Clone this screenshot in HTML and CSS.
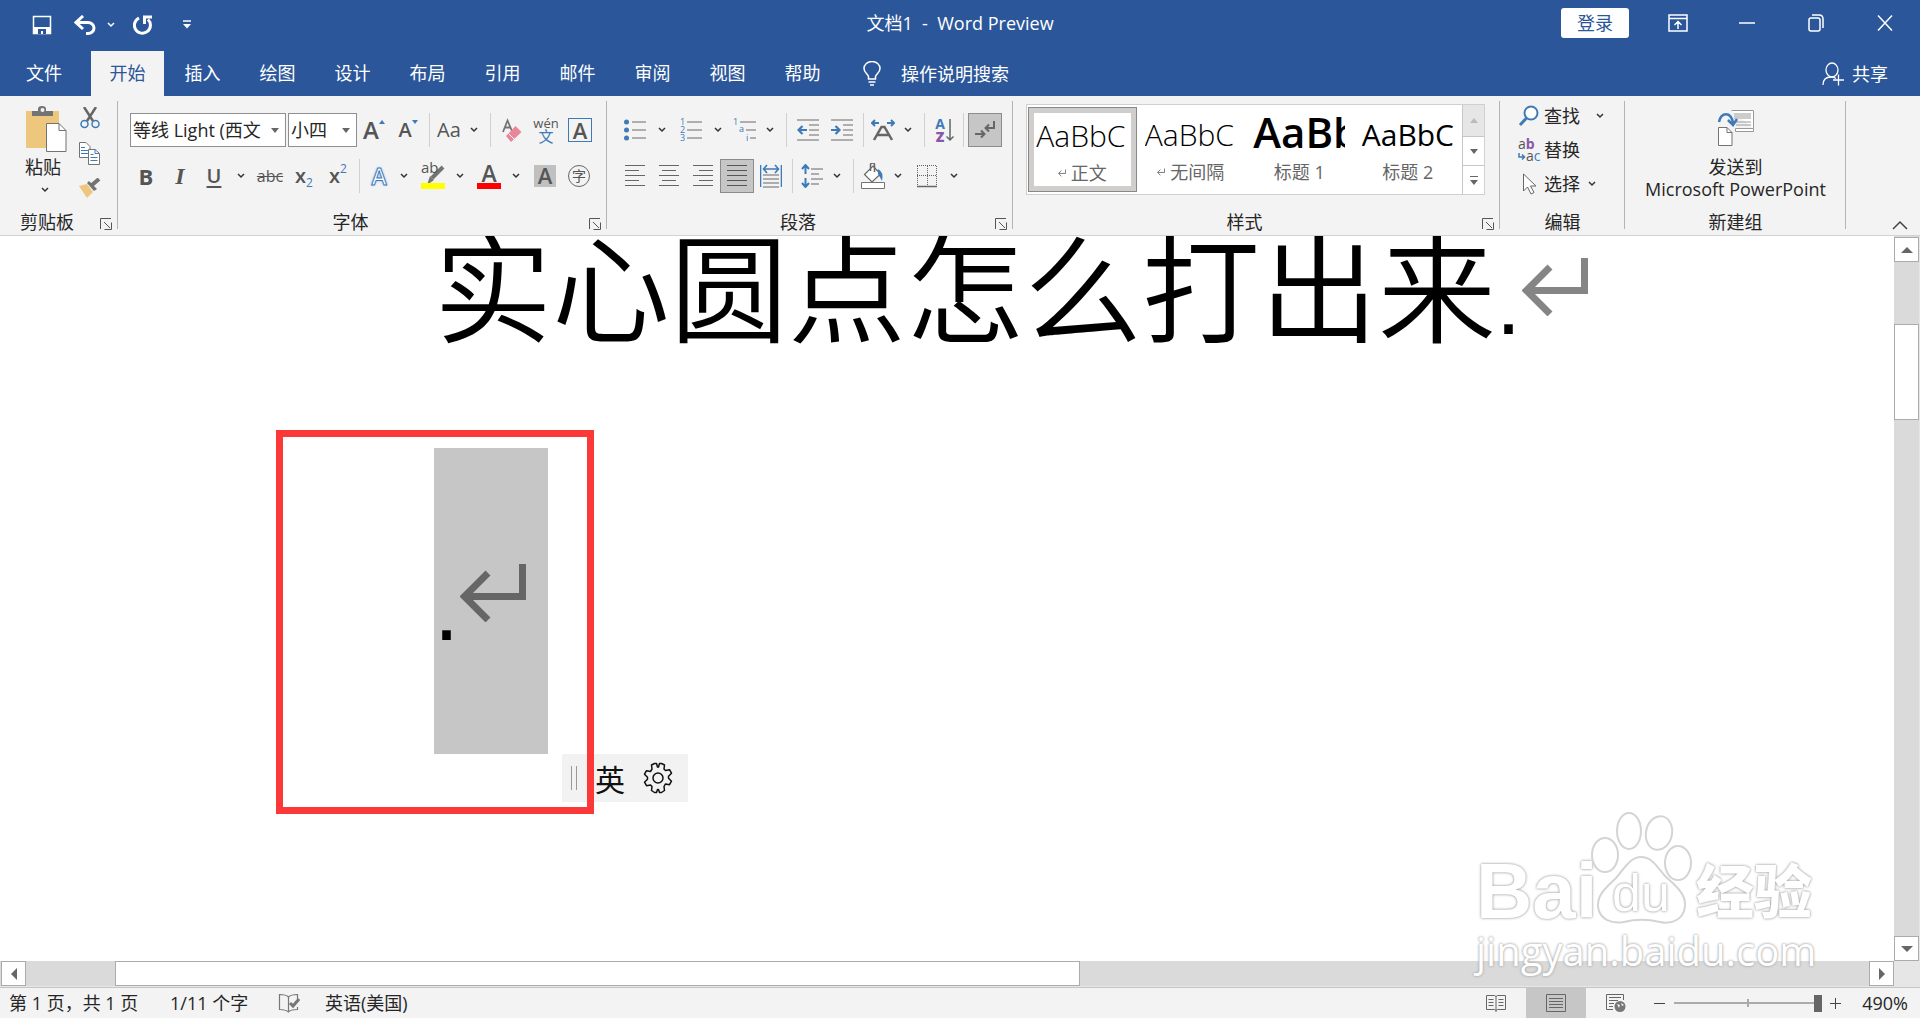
FILE: index.html
```html
<!DOCTYPE html>
<html lang="zh-CN">
<head>
    <meta charset="UTF-8">
    <title>文档1 - Word Preview</title>
    <link rel="stylesheet" href="styles.css">
</head>
<body>
<svg class="sprite">
    <symbol id="chev" viewBox="0 0 8 6"><path d="M1 1l3 3 3-3" fill="none" stroke="#333" stroke-width="1.5"/></symbol>
    <symbol id="launch" viewBox="0 0 12 12"><path d="M.5 11V.5H11M4 4l6 6M11.500 4.500v7h-7" fill="none" stroke="#555"/></symbol>
    <symbol id="enter" viewBox="0 0 66 58"><path d="M62.500 0v32.500H6M28 9L4.500 32.500 28 56" fill="none" stroke="currentColor" stroke-width="7"/></symbol>
</svg>

<header>
    <div class="titlebar">
        <div class="quick">
            <button class="q-save" aria-label="保存"><svg width="20" height="20"><path d="M1.500 1.500h17v17h-17z" fill="none" stroke="#fff" stroke-width="1.500"/><path d="M1 12h18v7H1z" fill="#fff"/><path d="M6 14h8v5h-3v-3H9v3H6z" fill="#2b579a"/></svg></button>
            <button class="q-undo" aria-label="撤消"><svg width="22" height="20"><path d="M9 1L2 7.500 9 14M2.500 7.500H14a6 5.500 0 0 1 0 11h-2" fill="none" stroke="#fff" stroke-width="3"/></svg></button>
            <button class="q-more" aria-label="撤消列表"><svg width="8" height="6"><path d="M1 1l3 3 3-3" fill="none" stroke="#fff" stroke-width="1.500"/></svg></button>
            <button class="q-redo" aria-label="重复"><svg width="20" height="20"><path d="M6 3a8 8 0 1 0 9 1.500M11.500 9V2H19" fill="none" stroke="#fff" stroke-width="3"/></svg></button>
            <button class="q-custom" aria-label="自定义"><svg width="8" height="9"><path d="M0 1h8" stroke="#fff" stroke-width="1.500"/><path d="M0 4h8L4 8.500z" fill="#fff"/></svg></button>
        </div>
        <div class="title">文档1&nbsp; -&nbsp; Word Preview</div>
        <div class="window">
            <button class="login">登录</button>
            <button class="win" aria-label="功能区显示选项"><svg width="20" height="18"><path d="M1 1h18v16H1zM1 4.500h18M10 15V7.500M6.500 11L10 7.500 13.500 11" fill="none" stroke="#fff" stroke-width="1.500"/></svg></button>
            <button class="win" aria-label="最小化"><svg width="16" height="18"><path d="M0 9h16" stroke="#fff" stroke-width="1.500"/></svg></button>
            <button class="win" aria-label="还原"><svg width="16" height="18"><rect x="1" y="4" width="11" height="13" rx="2" fill="none" stroke="#fff" stroke-width="1.500"/><path d="M4 1h7q4 0 4 4v9" fill="none" stroke="#fff" stroke-width="1.500"/></svg></button>
            <button class="win" aria-label="关闭"><svg width="16" height="18"><path d="M1 1.500l14 15M15 1.500l-14 15" stroke="#fff" stroke-width="1.500"/></svg></button>
        </div>
    </div>
    <nav>
        <a href="#" class="file">文件</a>
        <a href="#" class="active">开始</a>
        <a href="#">插入</a>
        <a href="#">绘图</a>
        <a href="#">设计</a>
        <a href="#">布局</a>
        <a href="#">引用</a>
        <a href="#">邮件</a>
        <a href="#">审阅</a>
        <a href="#">视图</a>
        <a href="#">帮助</a>
        <a href="#" class="tell"><svg width="18" height="26"><path d="M5.500 18v-2.500C4.500 12.500 1 11.500 1 7.500a8 7 0 0 1 16 0c0 4-3.500 5-4.500 8V18zM5.500 21h7M7 24h4" fill="none" stroke="#fff" stroke-width="1.500"/></svg>操作说明搜索</a>
        <a href="#" class="share"><svg width="22" height="24"><path d="M1 23c0-5 3-8 8-8 2 0 3 0 5 1.500" fill="none" stroke="#fff" stroke-width="1.300"/><ellipse cx="10" cy="8" rx="6" ry="7" fill="none" stroke="#fff" stroke-width="1.300"/><path d="M11 18h11M16.500 12.500v11" stroke="#fff" stroke-width="1.300"/></svg>共享</a>
    </nav>
</header>

<div class="ribbon">
    <section class="group clipboard">
        <div class="body">
            <button class="paste">
                <svg width="42" height="46"><path d="M1 5h33v37H1z" fill="#eec77e"/><path d="M7 10V5h6V3q0-3 4-3t4 3v2h7v5z" fill="#737373"/><circle cx="17.500" cy="4" r="2" fill="#f3f3f3"/><path d="M21.500 17.500H34l7 7v21H21.500z" fill="#fff" stroke="#737373"/><path d="M34 17.500v7h7" fill="none" stroke="#737373"/></svg>
                <span>粘贴</span>
                <svg class="chev"><use href="#chev"/></svg>
            </button>
            <div class="clips">
                <button aria-label="剪切"><svg width="20" height="22"><path d="M4 0l9 14M16 0L7 14" stroke="#666" stroke-width="2.500"/><circle cx="4.500" cy="17" r="3.500" fill="none" stroke="#3f7ab8" stroke-width="1.500"/><circle cx="15.500" cy="17" r="3.500" fill="none" stroke="#3f7ab8" stroke-width="1.500"/></svg></button>
                <button aria-label="复制"><svg width="21" height="23"><path d="M.5.5H7l4 4v11H.5z" fill="#fff" stroke="#737373"/><path d="M2 5.500h4M2 8.500h7M2 11.500h7" stroke="#3f7ab8"/><path d="M9.500 7.500H16l4.500 4v11h-11z" fill="#fff" stroke="#737373"/><path d="M16 7.500v4h4M11.500 12.500h3M11.500 15.500h7M11.500 18.500h7" fill="none" stroke="#3f7ab8"/></svg></button>
                <button aria-label="格式刷"><svg width="23" height="20"><path d="M1 8l8-2 6 8-6 6z" fill="#eec77e"/><path d="M9 5l2-2 8 8-3 2z" fill="#737373"/><path d="M14 7l7-6" stroke="#737373" stroke-width="4"/></svg></button>
            </div>
        </div>
        <footer><span>剪贴板</span><button class="launcher" aria-label="剪贴板选项"><svg><use href="#launch"/></svg></button></footer>
    </section>

    <section class="group font">
        <div class="body">
            <div class="row first">
                <label class="combo family"><select aria-label="字体"><option>等线 Light (西文</option></select></label>
                <label class="combo size"><select aria-label="字号"><option>小四</option></select></label>
                <button class="btn glyph" aria-label="增大字号"><span class="up">A</span><svg width="6" height="20"><path d="M0 4l3-4 3 4z" fill="#3f7ab8"/></svg></button>
                <button class="btn glyph" aria-label="减小字号"><span class="down">A</span><svg width="6" height="20"><path d="M0 0h6L3 4z" fill="#3f7ab8"/></svg></button>
                <i class="sep"></i>
                <button class="btn narrow glyph case">Aa</button><button class="caret" aria-label="更改大小写"><svg><use href="#chev"/></svg></button>
                <i class="sep"></i>
                <button class="btn" aria-label="清除格式"><svg width="20" height="24"><path d="M1 14L5.500 2.500 10 13M3 9.500h5" fill="none" stroke="#737373" stroke-width="1.800"/><path d="M4 18L13.500 8l6 6L9 24z" fill="#e98699"/><path d="M6.500 15.500l6 6" stroke="#f3f3f3"/></svg></button>
                <button class="btn pinyin"><span>wén</span><b>文</b></button>
                <button class="btn"><span class="boxed">A</span></button>
            </div>
            <div class="row second">
                <button class="btn bold">B</button>
                <button class="btn italic">I</button>
                <button class="btn under">U</button><button class="caret" aria-label="下划线"><svg><use href="#chev"/></svg></button>
                <button class="btn strike">abc</button>
                <button class="btn script">x<sub>2</sub></button>
                <button class="btn script">x<sup>2</sup></button>
                <i class="sep"></i>
                <button class="btn narrow effect">A</button><button class="caret" aria-label="文本效果"><svg><use href="#chev"/></svg></button>
                <button class="btn mark"><span>ab</span><svg width="24" height="26"><path d="M22 4L11 15" stroke="#737373" stroke-width="4"/><path d="M9 13l4 4-7 5z" fill="#737373"/><path d="M0 20h24v6H0z" fill="#ff0"/></svg></button><button class="caret" aria-label="突出显示颜色"><svg><use href="#chev"/></svg></button>
                <button class="btn color"><span>A</span></button><button class="caret" aria-label="字体颜色"><svg><use href="#chev"/></svg></button>
                <button class="btn"><span class="shade">A</span></button>
                <button class="btn"><span class="circled">字</span></button>
            </div>
        </div>
        <footer><span>字体</span><button class="launcher" aria-label="字体选项"><svg><use href="#launch"/></svg></button></footer>
    </section>

    <section class="group para">
        <div class="body">
            <div class="row">
                <button class="btn" aria-label="项目符号"><svg width="22" height="22"><path d="M8 3h14M8 11h14M8 19h14" stroke="#6a6a6a"/><g fill="#3f7ab8"><circle cx="2.500" cy="3" r="2.500"/><circle cx="2.500" cy="11" r="2.500"/><circle cx="2.500" cy="19" r="2.500"/></g></svg></button><button class="caret" aria-label="项目符号库"><svg><use href="#chev"/></svg></button>
                <button class="btn" aria-label="编号"><svg class="list" width="22" height="22"><path d="M7 3h15M7 11h15M7 19h15" stroke="#6a6a6a"/><g class="num"><text x="0" y="6">1</text><text x="0" y="14">2</text><text x="0" y="22">3</text></g></svg></button><button class="caret" aria-label="编号库"><svg><use href="#chev"/></svg></button>
                <button class="btn narrow" aria-label="多级列表"><svg class="list" width="24" height="22"><path d="M7 3h16M13 11h10M17 19h6" stroke="#6a6a6a"/><g class="num"><text x="0" y="6">1</text><text x="6" y="13">a</text><text x="13" y="22">i</text></g></svg></button><button class="caret" aria-label="列表库"><svg><use href="#chev"/></svg></button>
                <i class="sep"></i>
                <button class="btn" aria-label="减少缩进"><svg width="22" height="22"><path d="M0 1h22M12 6h10M12 11h10M12 16h10M0 21h22" stroke="#6a6a6a"/><path d="M10 11H2M5.500 7L1.500 11l4 4" fill="none" stroke="#3f7ab8" stroke-width="2.200"/></svg></button>
                <button class="btn" aria-label="增加缩进"><svg width="22" height="22"><path d="M0 1h22M12 6h10M12 11h10M12 16h10M0 21h22" stroke="#6a6a6a"/><path d="M0 11h8M4.500 7l4 4-4 4" fill="none" stroke="#3f7ab8" stroke-width="2.200"/></svg></button>
                <i class="sep"></i>
                <button class="btn narrow" aria-label="中文版式"><svg width="24" height="22"><path d="M3 21l7.500-13h3L21 21M6.500 16h11" fill="none" stroke="#666" stroke-width="2.500"/><path d="M8 4H1.500M4 1L1 4l3 3M16 4h6.500M20 1l3 3-3 3" fill="none" stroke="#3f7ab8" stroke-width="2"/></svg></button><button class="caret" aria-label="中文版式列表"><svg><use href="#chev"/></svg></button>
                <i class="sep"></i>
                <button class="btn narrow sort"><span>A<b>Z</b></span><svg width="8" height="24"><path d="M4 1v21M.5 18.500L4 22l3.500-3.500" fill="none" stroke="#666" stroke-width="1.500"/></svg></button>
                <i class="sep"></i>
                <button class="btn on" aria-label="显示编辑标记"><svg width="22" height="20"><path d="M20 1v7h-8M15 4.500L11.500 8l3.500 3.500M1 14h9M7 10.500l3.500 3.500L7 17.500" fill="none" stroke="#666" stroke-width="2"/></svg></button>
            </div>
            <div class="row">
                <button class="btn" aria-label="左对齐"><svg width="20" height="22"><path d="M0 .5h20M0 5.500h14M0 10.500h20M0 15.500h14M0 20.500h20" stroke="#666"/></svg></button>
                <button class="btn" aria-label="居中"><svg width="20" height="22"><path d="M0 .5h20M3 5.500h14M0 10.500h20M3 15.500h14M0 20.500h20" stroke="#666"/></svg></button>
                <button class="btn" aria-label="右对齐"><svg width="20" height="22"><path d="M0 .5h20M6 5.500h14M0 10.500h20M6 15.500h14M0 20.500h20" stroke="#666"/></svg></button>
                <button class="btn on" aria-label="两端对齐"><svg width="20" height="22"><path d="M0 .5h20M0 5.500h20M0 10.500h20M0 15.500h20M0 20.500h20" stroke="#555"/></svg></button>
                <button class="btn" aria-label="分散对齐"><svg width="22" height="24"><path d="M3 11h16M3 15h16M3 19h16M3 23h16" stroke="#666"/><path d="M.5 1v22M21.500 1v22M4 5h14M7 1L3.500 5 7 9M15 1l3.500 4L15 9" fill="none" stroke="#3f7ab8" stroke-width="1.600"/></svg></button>
                <i class="sep"></i>
                <button class="btn narrow" aria-label="行距"><svg width="22" height="24"><path d="M10 5h12M10 10h8M10 15h12M10 20h8" stroke="#666"/><path d="M4.500 2v8M1 5l3.500-4L8 5M4.500 14v8M1 19l3.500 4L8 19" fill="none" stroke="#3f7ab8" stroke-width="2"/></svg></button><button class="caret" aria-label="行距列表"><svg><use href="#chev"/></svg></button>
                <i class="sep"></i>
                <button class="btn narrow" aria-label="底纹"><svg width="24" height="26"><path d="M3.500 11.500L12 3l7.500 8L11 19z" fill="#fff" stroke="#666" stroke-width="1.200"/><path d="M9.500 8V2q0-2 2-2t2 2v7" fill="none" stroke="#666" stroke-width="1.500"/><path d="M17 6q6 3 4 12-2-4-4-7z" fill="#3f7ab8"/><path d="M.5 19.500h23v6H.5z" fill="#fff" stroke="#737373"/></svg></button><button class="caret" aria-label="底纹颜色"><svg><use href="#chev"/></svg></button>
                <button class="btn" aria-label="边框"><svg width="22" height="24"><path d="M1.500 2v20M11.500 2v20M20.500 2v20M1 1.500h20M1 11.500h20" stroke="#666" stroke-dasharray="1 1"/><path d="M1 22.500h20" stroke="#666" stroke-width="1.500"/></svg></button><button class="caret" aria-label="边框列表"><svg><use href="#chev"/></svg></button>
            </div>
        </div>
        <footer><span>段落</span><button class="launcher" aria-label="段落选项"><svg><use href="#launch"/></svg></button></footer>
    </section>

    <section class="group styles">
        <div class="gallery">
            <button class="style current"><span class="sample">AaBbC</span><span class="name"><svg class="tiny"><use href="#enter"/></svg>正文</span></button>
            <button class="style"><span class="sample">AaBbC</span><span class="name"><svg class="tiny"><use href="#enter"/></svg>无间隔</span></button>
            <button class="style"><span class="sample h1">AaBbC</span><span class="name">标题 1</span></button>
            <button class="style"><span class="sample h2">AaBbC</span><span class="name">标题 2</span></button>
            <div class="spin">
                <button class="off" aria-label="上一行"><svg width="8" height="5"><path d="M0 5l4-5 4 5z" fill="#bbb"/></svg></button>
                <button aria-label="下一行"><svg width="8" height="5"><path d="M0 0h8L4 5z" fill="#666"/></svg></button>
                <button aria-label="其他"><svg width="8" height="9"><path d="M0 .5h8" stroke="#666"/><path d="M0 4h8L4 9z" fill="#666"/></svg></button>
            </div>
        </div>
        <footer><span>样式</span><button class="launcher" aria-label="样式选项"><svg><use href="#launch"/></svg></button></footer>
    </section>

    <section class="group edit">
        <div class="body">
            <button><svg width="22" height="22"><circle cx="13" cy="8" r="6.500" fill="#fff" stroke="#3f7ab8" stroke-width="2"/><path d="M8.500 13L2 20" stroke="#3f7ab8" stroke-width="3"/></svg>查找<svg class="chev far"><use href="#chev"/></svg></button>
            <button><span class="swap">a<b>b</b><br><svg width="8" height="8"><path d="M1 0v4h5M4 1.500L6.500 4 4 6.500" fill="none" stroke="#3f7ab8" stroke-width="1.500"/></svg>a<i>c</i></span>替换</button>
            <button><svg width="22" height="22"><path d="M5.500 1v17l4-4 3.500 7 3-1.500-3.500-6.500H18z" fill="#fff" stroke="#666"/></svg>选择<svg class="chev"><use href="#chev"/></svg></button>
        </div>
        <footer><span>编辑</span></footer>
    </section>

    <section class="group send">
        <button class="body">
            <svg width="38" height="38"><path d="M14.500 1.500h22v18h-18v3h18v-3" fill="#fff" stroke="#999"/><path d="M17 4h17v6H17z" fill="#ccc"/><path d="M19 13h15M19 16h15" stroke="#999"/><path d="M2 13C4 3 14 2 16 14M11 11l5 5 4-6" fill="none" stroke="#3f7ab8" stroke-width="2.500"/><path d="M1.500 18.500H10l5 5v13H1.500z" fill="#fff" stroke="#737373"/><path d="M10 18.500v5h5" fill="none" stroke="#737373"/></svg>
            <span>发送到<br>Microsoft PowerPoint</span>
        </button>
        <footer><span>新建组</span></footer>
    </section>
    <button class="collapse" aria-label="折叠功能区"><svg width="16" height="10"><path d="M1 9l7-7 7 7" fill="none" stroke="#444" stroke-width="1.500"/></svg></button>
</div>

<main>
    <div class="doc">
        <p>实心圆点怎么打出来<span class="dot">.</span><svg class="mark-end"><use href="#enter"/></svg></p>
        <p><span class="selected"><span class="dot">.</span><svg class="mark-end"><use href="#enter"/></svg></span></p>
        <div class="ime"><i></i><span>英</span><svg width="32" height="32" viewBox="-16 -16 32 32"><path d="M-3.500-14.500h2L-.5-11H.5l1-3.500h2l3 1.500-.5 4 1.500 1.500 4-.8 2 3.500-3 3v2l3 3-2 3.500-4-.8L6 8.500l.5 4-3 2h-2L.5 11.500h-1l-1 3h-2l-3-2 .5-4-1.500-1.600-4 .8-2-3.500 3-3v-2l-3-3 2-3.500 4 .8L-6-9l-.5-4z" fill="none" stroke="#111" stroke-width="1.500" stroke-linejoin="round"/><circle r="5" fill="none" stroke="#111" stroke-width="1.500"/></svg></div>
        <div class="frame"></div>
    </div>
    <div class="vscroll">
        <button aria-label="向上"><svg width="12" height="6"><path d="M0 6l6-6 6 6z" fill="#666"/></svg></button>
        <div class="thumb"></div>
        <button aria-label="向下"><svg width="12" height="6"><path d="M0 0h12L6 6z" fill="#666"/></svg></button>
    </div>
    <div class="hscroll">
        <button aria-label="向左"><svg width="6" height="12"><path d="M6 0v12L0 6z" fill="#666"/></svg></button>
        <div class="thumb"></div>
        <button aria-label="向右"><svg width="6" height="12"><path d="M0 0v12l6-6z" fill="#666"/></svg></button>
    </div>
    <div class="watermark">
        <div class="brand">
            <span class="bai">Bai</span>
            <span class="paw"><svg width="106" height="114"><g fill="#fff" stroke="#d4d4d4" stroke-width="2"><ellipse cx="17" cy="44" rx="13" ry="17"/><ellipse cx="41" cy="20" rx="12" ry="18"/><ellipse cx="71" cy="22" rx="13" ry="17" transform="rotate(12 71 22)"/><ellipse cx="90" cy="52" rx="13" ry="17"/><path d="M53 46c12 0 17 12 25 20 10 9 20 17 19 29-1 13-13 19-25 16-13-3-24-3-36 0-12 2-24-2-26-15-1-13 9-20 18-29 8-9 14-21 25-21z"/></g></svg><em>du</em></span>
            <span class="exp">经验</span>
        </div>
        <div class="site">jingyan.baidu.com</div>
    </div>
</main>

<div class="status">
    <span class="pages">第 1 页，共 1 页</span>
    <span class="words">1/11 个字</span>
    <button class="proof" aria-label="校对"><svg width="22" height="20"><path d="M10.500 4Q8 1.500 1.500 1.500v15q6 0 9 2.500 2-2.500 9-2.500V14M10.500 4Q13 1.500 19.500 1.500V6M10.500 4v14" fill="none" stroke="#777" stroke-width="1.200"/><path d="M12 10l3 3 6-7" fill="none" stroke="#777" stroke-width="3"/></svg></button>
    <span>英语(美国)</span>
    <div class="views">
        <button aria-label="阅读视图"><svg width="20" height="18"><path d="M.5 1.500h8l1.500 1 1.500-1h8v14h-8l-1.500 1-1.500-1h-8zM10 2v16M2.500 5.500h5M2.500 8.500h5M2.500 11.500h5M12.500 5.500h5M12.500 8.500h5M12.500 11.500h5" fill="none" stroke="#666"/></svg></button>
        <button class="now" aria-label="页面视图"><svg width="20" height="18"><path d="M.5.500h19v17H.5zM3 4.500h14M3 7.500h14M3 10.500h14M3 13.500h14" fill="none" stroke="#666"/></svg></button>
        <button aria-label="Web 版式"><svg width="20" height="18"><path d="M7 15.500H.5V.500h17V6M3 3.500h12M3 6.500h9M3 9.500h5M3 12.500h4" fill="none" stroke="#666"/><circle cx="14" cy="12.500" r="5.500" fill="#777"/><path d="M11 10l3 1-1 3zM15 9l3 2-2 1zM15 15l2-1" fill="#f3f3f3"/></svg></button>
    </div>
    <button class="zoom" aria-label="缩小"><svg width="11" height="11"><path d="M0 5.500h11" stroke="#444"/></svg></button>
    <input type="range" min="10" max="500" value="500" aria-label="显示比例">
    <button class="zoom" aria-label="放大"><svg width="11" height="11"><path d="M0 5.500h11M5.500 0v11" stroke="#444"/></svg></button>
    <span class="percent">490%</span>
</div>
</body>
</html>
```
FILE: styles.css
```css
* {
    margin: 0;
    padding: 0;
    box-sizing: border-box;
}

body {
    height: 100vh;
    display: flex;
    flex-direction: column;
    overflow: hidden;
    background: #fff;
    color: #262626;
    font: 18px/22px "Open Sans", "Noto Sans CJK SC", sans-serif;
}

button, select {
    font: inherit;
    color: inherit;
    border: 0;
    background: none;
}

button {
    display: flex;
    align-items: center;
    justify-content: center;
    white-space: nowrap;
}

svg {
    flex: none;
    display: block;
}

a {
    color: #fff;
    text-decoration: none;
}

i {
    font-style: normal;
}

.sprite {
    position: absolute;
    width: 0;
    height: 0;
}

/* title bar and tabs */
header {
    background: #2b579a;
    color: #fff;
}

.titlebar {
    height: 51px;
    display: flex;
}

.quick, .window {
    flex: 1;
    display: flex;
}

.quick {
    height: 49px;
    align-items: center;
}

.q-save {
    margin-left: 32px;
}

.q-undo {
    margin-left: 22px;
}

.q-more {
    margin-left: 11px;
}

.q-redo {
    margin-left: 18px;
}

.q-custom {
    margin-left: 30px;
}

.title {
    line-height: 46px;
}

.window {
    height: 46px;
    align-items: center;
    justify-content: flex-end;
}

.login {
    width: 68px;
    height: 30px;
    margin-right: 14px;
    border-radius: 3px;
    background: #fff;
    color: #2b579a;
}

.win {
    width: 69px;
    height: 46px;
}

.win:last-child {
    margin-right: 1px;
}

nav {
    height: 45px;
    display: flex;
}

nav a {
    width: 75px;
    line-height: 44px;
    text-align: center;
}

nav .file {
    width: 91px;
    padding-right: 3px;
}

nav .active {
    width: 73px;
    margin-right: 1px;
    background: #f3f3f3;
    color: #2b579a;
}

nav .tell, nav .share {
    width: auto;
    display: flex;
    align-items: center;
    gap: 20px;
}

nav .tell {
    margin-left: 23px;
}

nav .share {
    margin-left: auto;
    padding-right: 32px;
    gap: 8px;
}

/* ribbon */
.ribbon {
    height: 140px;
    display: flex;
    background: #f3f3f3;
    border-bottom: 1px solid #d2d2d2;
}

.group {
    position: relative;
    display: flex;
    flex-direction: column;
}

.group::after {
    content: "";
    position: absolute;
    right: 0;
    top: 5px;
    bottom: 6px;
    width: 1px;
    background: #b4b4b4;
}

.group footer {
    height: 26px;
    margin-top: auto;
    display: flex;
    align-items: center;
}

.group footer span {
    flex: 1;
    text-align: center;
}

.launcher {
    width: 24px;
    padding-top: 3px;
}

.launcher svg {
    width: 12px;
    height: 12px;
}

.chev, .caret svg {
    width: 8px;
    height: 6px;
}

.clipboard {
    width: 118px;
}

.clipboard .body {
    display: flex;
    padding: 10px 0 0 25px;
    gap: 11px;
}

.paste {
    width: 42px;
    flex-direction: column;
    justify-content: flex-start;
}

.paste span {
    margin: 4px 6px 9px 0;
}

.paste .chev {
    margin-right: 3px;
}

.clips {
    display: grid;
    align-content: start;
    gap: 11px;
}

.clips button {
    height: 24px;
}

.font {
    width: 489px;
}

.para {
    width: 406px;
}

.font .body, .para .body {
    padding: 17px 0 0 11px;
    display: grid;
    gap: 12px;
}

.row {
    height: 34px;
    display: flex;
}

.row.first {
    padding-left: 1px;
}

.btn {
    width: 34px;
    height: 34px;
    color: #555;
}

.narrow {
    width: 30px;
}

.caret {
    width: 22px;
}

.row .caret {
    padding-right: 2px;
}

.sep {
    width: 1px;
    margin: 0 4px;
    background: #d0d0d0;
}

.on {
    background: #c6c6c6;
    border: 1px solid #8c8c8c;
}

.combo {
    position: relative;
    height: 34px;
    border: 1px solid #8f8f8f;
    background: #fff;
}

.combo::after {
    content: "";
    position: absolute;
    right: 6px;
    top: 14px;
    border: 4px solid transparent;
    border-top: 5px solid #666;
    border-bottom: 0;
}

.combo select {
    width: 100%;
    height: 32px;
    padding: 0 18px 0 2px;
    appearance: none;
    outline: none;
}

.family {
    width: 156px;
    margin-right: 2px;
}

.size {
    width: 69px;
}

.glyph {
    font-weight: 600;
    line-height: 32px;
}

.glyph .up {
    font-size: 24px;
}

.glyph .down {
    font-size: 20px;
}

.case {
    font-size: 20px;
    font-weight: 400;
}

.pinyin {
    flex-direction: column;
    font-size: 13px;
    line-height: 13px;
}

.pinyin b {
    font-size: 15px;
    font-weight: 400;
    color: #3f7ab8;
}

.boxed {
    width: 24px;
    height: 24px;
    border: 1px solid #3f7ab8;
    font-weight: 600;
    font-size: 22px;
    line-height: 22px;
}

.bold {
    font-weight: 700;
    font-size: 22px;
}

.italic {
    font: italic bold 24px "Liberation Serif", serif;
}

.under {
    font-weight: 600;
    font-size: 20px;
    text-decoration: underline;
    text-underline-offset: 3px;
}

.strike {
    font-size: 16px;
    text-decoration: line-through;
}

.script {
    font-size: 20px;
    font-weight: 600;
}

.script sub, .script sup {
    font-size: 12px;
    font-weight: 400;
    color: #3f7ab8;
}

.script sub {
    padding-top: 14px;
}

.script sup {
    padding-bottom: 14px;
}

.effect {
    font-size: 23px;
    font-weight: 600;
    color: #fff;
    -webkit-text-stroke: 1px #3f7ab8;
    text-shadow: 0 0 3px #7db0e8;
}

.mark {
    position: relative;
}

.mark span {
    position: absolute;
    left: 5px;
    top: 0;
    font-size: 15px;
    line-height: 16px;
}

.color span {
    width: 24px;
    height: 26px;
    border-bottom: 6px solid #f00;
    font-size: 23px;
    font-weight: 600;
    line-height: 20px;
}

.shade {
    width: 22px;
    height: 22px;
    background: #c0c0c0;
    font-size: 22px;
    font-weight: 600;
    line-height: 21px;
}

.circled {
    width: 22px;
    height: 22px;
    border: 1px solid #666;
    border-radius: 50%;
    font-size: 14px;
    line-height: 19px;
}

.list {
    overflow: visible;
}

.num {
    font-size: 9px;
    fill: #3f7ab8;
}

.sort span {
    width: 12px;
    font-size: 14px;
    font-weight: 700;
    line-height: 13px;
    white-space: normal;
    color: #3f7ab8;
}

.sort b {
    display: block;
    color: #8a56a8;
}

.styles {
    flex: 1;
}

.gallery {
    height: 91px;
    margin: 8px 15px 0 13px;
    padding-left: 1px;
    display: flex;
    background: #fff;
    border: 1px solid #d0d0d0;
}

.style {
    flex: 1 1 108px;
    height: 85px;
    margin-top: 2px;
    min-width: 0;
    flex-direction: column;
    justify-content: flex-start;
}

.current {
    border: 1px solid #8a8886;
    box-shadow: inset 0 0 0 5px #d0cecc;
}

.sample {
    width: 92px;
    height: 50px;
    overflow: hidden;
    text-align: left;
    font-size: 30px;
    font-weight: 300;
    line-height: 56px;
    color: #000;
}

.sample.h1 {
    font-size: 42px;
    font-weight: 600;
    line-height: 50px;
}

.sample.h2 {
    font-weight: 400;
}

.name {
    display: flex;
    align-items: center;
    line-height: 30px;
    gap: 5px;
    color: #666;
}

.tiny {
    width: 8px;
    height: 12px;
}

.spin {
    width: 22px;
    display: grid;
    grid-template-rows: 31px 29px 29px;
    border-left: 1px solid #c6c6c6;
}

.spin button + button {
    border-top: 1px solid #c6c6c6;
}

.spin .off {
    background: #e6e6e6;
}

.edit {
    width: 125px;
}

.edit .body {
    padding: 3px 0 0 18px;
    display: grid;
}

.edit .body button {
    height: 34px;
    justify-content: flex-start;
    gap: 4px;
}

.edit .chev {
    margin-left: 4px;
}

.edit .far {
    margin-left: 12px;
}

.swap {
    width: 22px;
    font-size: 14px;
    line-height: 12px;
    text-align: left;
    color: #555;
}

.swap b {
    color: #8a56a8;
}

.swap i {
    color: #3f7ab8;
}

.swap svg {
    display: inline-block;
}

.send {
    width: 221px;
}

.send .body {
    padding-top: 13px;
    flex-direction: column;
}

.send .body span {
    margin-top: 9px;
}

.collapse {
    width: 74px;
    padding: 0 12px 5px 0;
    align-items: flex-end;
    justify-content: flex-end;
}

/* document */
main {
    position: relative;
    flex: 1;
    min-height: 0;
    display: grid;
    grid-template: minmax(0, 1fr) 26px / minmax(0, 1fr) 26px;
    background: #e6e6e6;
}

.doc {
    position: relative;
    overflow: hidden;
    background: #fff;
    color: #000;
    font-family: "Noto Sans CJK SC", sans-serif;
    font-size: 118px;
    font-weight: 350;
    line-height: 282px;
}

.doc p {
    height: 306px;
    padding-left: 434px;
    white-space: nowrap;
}

.doc p:first-child {
    margin-top: -94px;
}

.dot {
    display: inline-block;
    width: 26px;
    font-family: "Liberation Sans", sans-serif;
    font-size: 90px;
    line-height: 90px;
}

.mark-end {
    display: inline-block;
    width: 66px;
    height: 58px;
    margin-right: 22px;
    vertical-align: 18px;
    color: #858585;
}

.selected {
    display: inline-block;
    height: 306px;
    background: #c6c6c6;
}

.selected .mark-end {
    color: #666;
}

.ime {
    position: absolute;
    left: 562px;
    top: 518px;
    width: 126px;
    height: 48px;
    display: flex;
    align-items: center;
    background: #f2f2f2;
    color: #111;
    font-size: 30px;
    font-weight: 400;
    line-height: 48px;
}

.ime i {
    width: 6px;
    height: 24px;
    margin: 0 18px 0 9px;
    border: solid #999;
    border-width: 0 1px;
}

.ime span {
    margin-right: 17px;
}

.frame {
    position: absolute;
    left: 276px;
    top: 194px;
    width: 318px;
    height: 384px;
    border: 7px solid #fc3838;
}

.vscroll, .hscroll {
    display: flex;
    background: #dadada;
}

.vscroll {
    flex-direction: column;
    justify-content: space-between;
    padding-top: 1px;
    margin-right: 1px;
}

.hscroll {
    margin-bottom: 1px;
    padding-left: 1px;
}

.vscroll button, .hscroll button, .thumb {
    width: 25px;
    height: 25px;
    background: #fff;
    border: 1px solid #ababab;
}

.vscroll .thumb {
    height: 96px;
    margin: 62px 0 auto;
}

.hscroll .thumb {
    width: 51%;
    margin: 0 auto 0 89px;
}

.watermark {
    position: absolute;
    right: 102px;
    bottom: 10px;
    width: 342px;
    color: #fff;
    text-shadow: 0 0 3px #999, 0 0 2px #ccc;
}

.brand {
    display: flex;
    align-items: flex-end;
    font-weight: 900;
}

.bai {
    width: 112px;
    font: bold 78px/68px "Liberation Sans", sans-serif;
}

.paw {
    position: relative;
    width: 106px;
}

.paw em {
    position: absolute;
    left: 0;
    right: 0;
    bottom: 6px;
    text-align: center;
    font: normal 52px/52px "Liberation Sans", sans-serif;
}

.exp {
    margin-left: 2px;
    font-size: 58px;
    line-height: 68px;
}

.site {
    font-size: 40px;
    line-height: 52px;
}

/* status bar */
.status {
    height: 31px;
    padding: 0 12px 0 9px;
    display: flex;
    align-items: center;
    background: #f3f3f3;
    border-top: 1px solid #c6c6c6;
    white-space: nowrap;
}

.pages {
    width: 161px;
}

.words {
    width: 108px;
}

.proof {
    margin-right: 25px;
}

.views {
    margin-left: auto;
    display: flex;
}

.views button {
    width: 60px;
    height: 30px;
}

.views .now {
    background: #c6c6c6;
}

.zoom {
    width: 11px;
    height: 30px;
}

.views + .zoom {
    margin-left: 8px;
}

.status input {
    width: 148px;
    height: 18px;
    margin: 0 8px 0 9px;
    appearance: none;
    background: linear-gradient(#ababab, #ababab) center / 2px 8px no-repeat, linear-gradient(#ababab, #ababab) center / 100% 2px no-repeat;
}

.status input::-webkit-slider-thumb {
    appearance: none;
    width: 8px;
    height: 17px;
    background: #666;
}

.percent {
    width: 67px;
    text-align: right;
}
```
